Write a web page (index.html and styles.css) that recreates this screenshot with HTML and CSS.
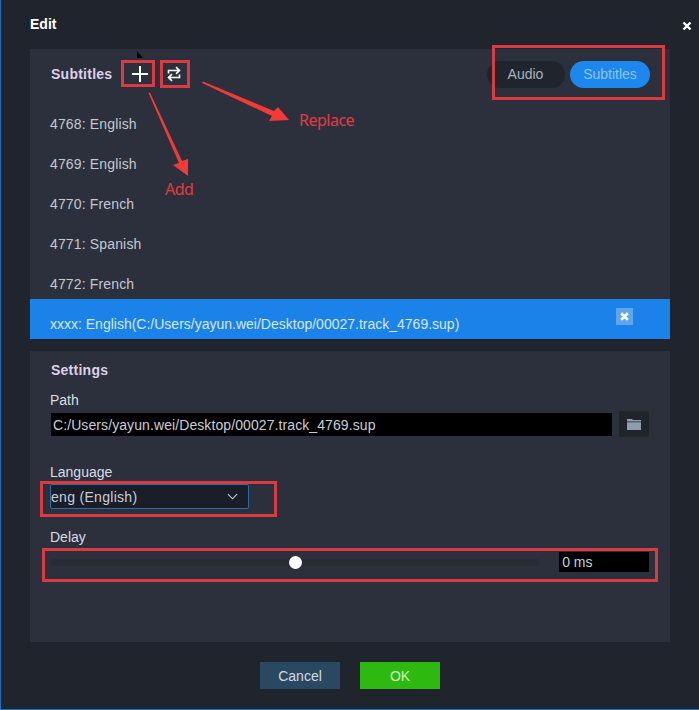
FILE: index.html
```html
<!DOCTYPE html>
<html lang="en">
<head>
<meta charset="utf-8">
<title>Edit</title>
<link rel="stylesheet" href="styles.css">
</head>
<body>
<div class="dialog">
  <header class="titlebar">
    <span class="title">Edit</span>
    <svg class="close" viewBox="0 0 10 10"><path d="M1.5 1.5 8.5 8.5M8.5 1.5 1.5 8.5"/></svg>
  </header>

  <section class="panel tracks">
    <div class="tracks-head">
      <span class="heading">Subtitles</span>
      <button class="icon-btn icon-plus"><svg viewBox="0 0 16 16"><path d="M8 0V16M0 8H16"/></svg></button>
      <button class="icon-btn icon-swap"><svg viewBox="0 0 14 16"><path d="M1.500 7.500V4.500H12M9 1.200 12.500 4.500 9 7.800M12.500 8.500V11.500H2M5 8.200 1.500 11.500 5 14.800"/></svg></button>
      <div class="toggle">
        <span class="pill pill-off">Audio</span>
        <span class="pill pill-on">Subtitles</span>
      </div>
    </div>
    <ul class="track-list">
      <li class="track">4768: English</li>
      <li class="track">4769: English</li>
      <li class="track">4770: French</li>
      <li class="track">4771: Spanish</li>
      <li class="track">4772: French</li>
      <li class="track selected">
        <span>xxxx: English(C:/Users/yayun.wei/Desktop/00027.track_4769.sup)</span>
        <span class="remove"><svg viewBox="0 0 10 10"><path d="M2 2 8 8M8 2 2 8"/></svg></span>
      </li>
    </ul>
  </section>

  <section class="panel settings">
    <h2 class="heading settings-title">Settings</h2>
    <div class="field-label label-path">Path</div>
    <div class="path-row">
      <div class="path-input">C:/Users/yayun.wei/Desktop/00027.track_4769.sup</div>
      <button class="folder-btn"><svg viewBox="0 0 14 12"><path d="M0 1H5L6 2H14V3.500H0ZM0 4.200H14V12H0Z"/></svg></button>
    </div>
    <div class="field-label label-lang">Language</div>
    <div class="select">
      <span>eng (English)</span>
      <svg viewBox="0 0 12 7"><path d="M1 1 6 6 11 1"/></svg>
    </div>
    <div class="field-label label-delay">Delay</div>
    <div class="delay-row">
      <div class="slider"><span class="thumb"></span></div>
      <div class="delay-input">0 ms</div>
    </div>
  </section>

  <footer class="footer">
    <button class="btn btn-cancel">Cancel</button>
    <button class="btn btn-ok">OK</button>
  </footer>

  <div class="mark mark-plus"></div>
  <div class="mark mark-swap"></div>
  <div class="mark mark-toggle"></div>
  <div class="mark mark-lang"></div>
  <div class="mark mark-delay"></div>
  <svg class="arrows" viewBox="0 0 699 710">
    <path class="cursor" d="M137 51 L137 58 L143 58 Z"/>
    <path class="arrow" d="M148.500 93 L150 92.500 L182 161 L188 159 L188 176 L173 165 L179 163 Z"/>
    <path class="arrow" d="M202 83 L203 81.500 L274 111 L278 107 L289 120 L269 121 L272 116 Z"/>
  </svg>
  <span class="note note-replace">Replace</span>
  <span class="note note-add">Add</span>
</div>
</body>
</html>
```
FILE: styles.css
```css
* { box-sizing: border-box; }
html, body { margin: 0; padding: 0; }
body { background: #20252d; font-family: "Liberation Sans", Arial, sans-serif; }
button { font-family: inherit; border: 0; padding: 0; }

.dialog {
  position: relative;
  width: 699px;
  height: 710px;
  overflow: hidden;
  background: #20252d;
  border-left: 1px solid #1d6fb8;
  border-bottom: 1px solid #1d6fb8;
  display: flex;
  flex-direction: column;
  padding: 0 29px 0 29px;
  color: #c9ced6;
  font-size: 14px;
}

.titlebar { height: 49px; flex: none; display: flex; align-items: flex-start; justify-content: space-between; }
.title { margin-top: 16px; font-size: 14px; font-weight: 700; color: #fff; line-height: 16px; }
.close { width: 10px; height: 10px; margin: 21px -22px 0 0; }
.close path { stroke: #fff; stroke-width: 2.4; fill: none; }

.panel { background: #2b303c; flex: none; }
.tracks { height: 290px; }
.settings { height: 291px; margin-top: 12px; padding: 9px 21px 0 20px; }

.tracks-head { height: 50px; display: flex; align-items: center; padding: 0 20px 0 21px; }
.heading { font-size: 14px; font-weight: 700; color: #ddd0ea; letter-spacing: .25px; margin: 0; }
.icon-btn { background: none; display: flex; align-items: center; justify-content: center; }
.icon-plus { width: 16px; height: 16px; margin-left: 20px; }
.icon-swap { width: 14px; height: 16px; margin-left: 19px; }
.icon-btn svg { display: block; width: 100%; height: 100%; }
.icon-plus path { stroke: #fff; stroke-width: 2; fill: none; }
.icon-swap path { stroke: #fff; stroke-width: 1.6; fill: none; }

.toggle { margin-left: auto; display: flex; gap: 5px; }
.pill { height: 27px; border-radius: 14px; display: flex; align-items: center; justify-content: center; font-size: 14px; }
.pill-off { width: 78px; background: #20252d; color: #a9b1bd; padding-right: 1px; }
.pill-on { width: 80px; background: #1d87ee; color: #8cc6f5; }

.track-list { list-style: none; margin: 0; padding: 0; }
.track { height: 40px; padding: 10px 0 0 20px; line-height: 30px; color: #c4c9d1; letter-spacing: .15px; }
.track.selected { background: #1b82ea; color: #d5e9fb; display: flex; justify-content: space-between; padding-right: 37px; letter-spacing: 0; }
.remove { width: 17px; height: 17px; margin-top: -1px; background: #5fa6ee; display: flex; align-items: center; justify-content: center; }
.remove svg { width: 11px; height: 11px; }
.remove path { stroke: #fff; stroke-width: 2.4; fill: none; }

.field-label { line-height: 16px; color: #d9dde3; }
.settings-title { line-height: 20px; padding-left: 1px; }
.label-path { margin-top: 12px; }
.path-row { display: flex; align-items: center; margin-top: 3px; padding-left: 1px; }
.path-input { width: 561px; height: 23px; line-height: 24px; background: #000; color: #c9ced6; padding-left: 2px; letter-spacing: .09px; }
.folder-btn { width: 30px; height: 26px; margin-left: 7px; background: #20252d; display: flex; align-items: center; justify-content: center; border-radius: 2px; }
.folder-btn svg { width: 14px; height: 12px; fill: #8f9cad; }
.label-lang { margin-top: 27px; }
.select {
  width: 199px; height: 25px; margin-top: 4px;
  background: #1a1e28; border: 1px solid #2f6da5; border-radius: 2px;
  display: flex; align-items: center; justify-content: space-between;
  padding: 0 10px 0 0; color: #c9ced6; letter-spacing: .3px;
}
.select svg { width: 11px; height: 7px; }
.select path { stroke: #c9ced6; stroke-width: 1.2; fill: none; }
.label-delay { margin-top: 20px; }
.delay-row { display: flex; align-items: center; margin-top: 7px; }
.slider { position: relative; width: 489px; height: 7px; margin-left: 1px; background: #282c36; }
.thumb { position: absolute; left: 238px; top: -3px; width: 13px; height: 13px; border-radius: 50%; background: #fff; }
.delay-input { width: 90px; height: 20px; margin-left: 20px; margin-right: 0; background: #000; line-height: 20px; padding-left: 3px; color: #c9ced6; }

.footer { flex: 1; display: flex; justify-content: center; gap: 20px; padding-top: 20px; padding-right: 0; }
.btn { width: 80px; height: 27px; font-size: 14px; }
.btn-cancel { background: #294862; color: #d3dbe3; }
.btn-ok { background: #2db90f; color: #cdf2c4; }

.mark { position: absolute; border: 3px solid #db3a40; }
.mark-plus { left: 120px; top: 60px; width: 34px; height: 27px; }
.mark-swap { left: 159px; top: 60px; width: 30px; height: 28px; }
.mark-toggle { left: 491px; top: 45px; width: 173px; height: 55px; }
.mark-lang { left: 39px; top: 481px; width: 237px; height: 36px; }
.mark-delay { left: 41px; top: 548px; width: 616px; height: 34px; }

.arrows { position: absolute; left: -1px; top: 0; width: 699px; height: 710px; pointer-events: none; }
.arrow { fill: #f23a36; }
.cursor { fill: #000; }
.note { position: absolute; color: #e23c3f; font-family: "Noto Sans", sans-serif; font-size: 16px; letter-spacing: -.5px; line-height: 20px; }
.note-replace { left: 298px; top: 110px; }
.note-add { left: 164px; top: 179px; }
```
